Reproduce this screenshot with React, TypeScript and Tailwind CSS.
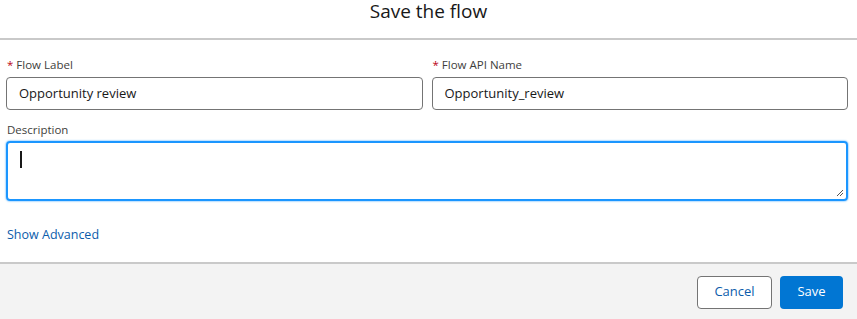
export default function App() {
  return (
    <div
      className="w-full h-[319px] flex flex-col bg-white text-[#181818] overflow-hidden"
      style={{ fontFamily: '"Open Sans", "Noto Sans", sans-serif' }}
    >
      {/* ── Header ─────────────────────────────── */}
      <div className="h-[40px] shrink-0 flex justify-center border-b-2 border-[#c9c9c9]">
        <h1 className="text-[19px] leading-[22px] text-[#181818]">Save the flow</h1>
      </div>

      {/* ── Body ───────────────────────────────── */}
      <div className="flex-1 flex flex-col px-[6px] pt-[17px]">
        <div className="grid grid-cols-2 gap-[9px] pr-[3px]">
          <div className="flex flex-col">
            <label className="text-[11.5px] leading-[16px] text-[#3e3e3c] pl-[1px] mb-[4px]">
              <abbr className="text-[#ba0517] no-underline mr-[3px]">*</abbr>Flow Label
            </label>
            <div className="h-[33px] rounded-[4px] border border-[#747474] flex items-center px-[12px] text-[13px]">
              Opportunity review
            </div>
          </div>
          <div className="flex flex-col">
            <label className="text-[11.5px] leading-[16px] text-[#3e3e3c] pl-[1px] mb-[4px]">
              <abbr className="text-[#ba0517] no-underline mr-[3px]">*</abbr>Flow API Name
            </label>
            <div className="h-[33px] rounded-[4px] border border-[#747474] flex items-center px-[12px] text-[13px]">
              Opportunity_review
            </div>
          </div>
        </div>

        <label className="text-[11.5px] leading-[16px] text-[#3e3e3c] pl-[1px] mt-[12px] mb-[3px]">
          Description
        </label>
        <div className="relative h-[60px] mr-[3px] rounded-[4px] border-2 border-[#1b96ff] shadow-[0_0_2px_#1b96ff]">
          <div className="absolute left-[12px] top-[8px] w-[1.5px] h-[17px] bg-[#181818]" />
          <svg className="absolute right-[2px] bottom-[2px]" width="9" height="9" viewBox="0 0 9 9">
            <path d="M8 2 L2 8 M8 5 L5 8" stroke="#555" strokeWidth="1" fill="none" />
          </svg>
        </div>

        <a className="text-[12.5px] leading-[16px] text-[#0b5cab] pl-[1px] mt-[26px] cursor-pointer">
          Show Advanced
        </a>
      </div>

      {/* ── Footer ─────────────────────────────── */}
      <div className="h-[57px] shrink-0 bg-[#f3f3f3] border-t-2 border-[#c9c9c9] flex items-center justify-end gap-[8px] pr-[14px] pt-[1px]">
        <button className="h-[33px] w-[75px] rounded-[4px] border border-[#747474] bg-white text-[13px] text-[#0b5cab]">
          Cancel
        </button>
        <button className="h-[33px] w-[63px] rounded-[4px] bg-[#0176d3] text-[13px] text-white">
          Save
        </button>
      </div>
    </div>
  );
}
